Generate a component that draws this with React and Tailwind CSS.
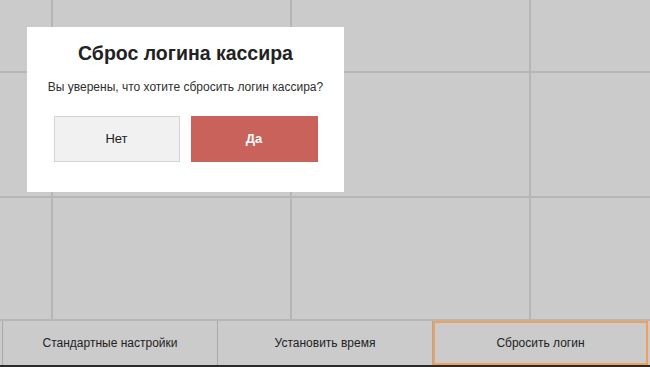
import React from 'react'

const CELLS = Array.from({ length: 12 })

function ConfirmDialog({ title, message, onNo, onYes }) {
  return (
    <div className="absolute left-[27px] top-[27px] flex h-[165px] w-[317px] flex-col items-center bg-white">
      <h2 className="m-0 mt-[14px] text-[19.5px] font-bold leading-[24px] text-[#222]">{title}</h2>
      <p className="m-0 mt-[15px] text-[12px] leading-[15px] text-[#2e2e2e]">{message}</p>
      <div className="mt-[21px] flex gap-[11px]">
        <button
          type="button"
          onClick={onNo}
          className="h-[46px] w-[126px] border border-[#d4d4d4] bg-[#f1f1f1] text-[13px] text-[#222]"
        >
          Нет
        </button>
        <button
          type="button"
          onClick={onYes}
          className="h-[46px] w-[127px] bg-[#c9625a] text-[13px] font-bold text-white"
        >
          Да
        </button>
      </div>
    </div>
  )
}

export default function App() {
  const actions = ['Стандартные настройки', 'Установить время', 'Сбросить логин']

  return (
    <div className="relative flex h-[367px] w-[650px] flex-col overflow-hidden bg-[#cbcbcb] font-['Liberation_Sans',Arial,sans-serif]">
      <div className="grid h-[319px] grid-cols-[51px_237px_237px_1fr] grid-rows-[71px_123px_1fr] gap-[2px] bg-[#b6b6b6]">
        {CELLS.map((_, i) => (
          <div key={i} className="bg-[#cbcbcb]" />
        ))}
      </div>

      <div className="flex h-[46px] border-t-2 border-[#b6b6b6] bg-[#cbcbcb]">
        <div className="w-[3px] border-r border-[#a9a9a9]" />
        {actions.map((label, i) => (
          <button
            key={label}
            type="button"
            className={
              i === 2
                ? 'flex flex-1 items-center justify-center border-2 border-[#f0a058] text-[12px] text-[#222]'
                : 'flex w-[215px] items-center justify-center border-r border-[#a9a9a9] text-[12px] text-[#222]'
            }
          >
            {label}
          </button>
        ))}
        <div className="w-[2px]" />
      </div>
      <div className="h-[2px] bg-[#2a2a2a]" />

      <ConfirmDialog
        title="Сброс логина кассира"
        message="Вы уверены, что хотите сбросить логин кассира?"
      />
    </div>
  )
}
